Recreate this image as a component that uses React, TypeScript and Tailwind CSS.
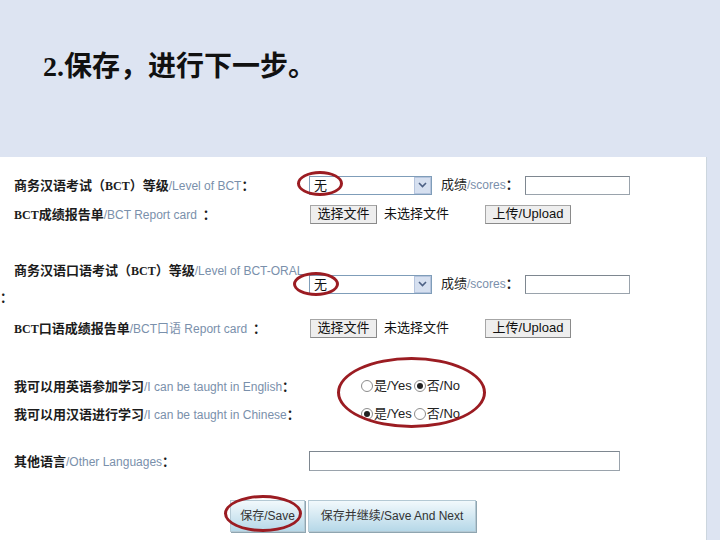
import React from "react";

const font = "font-['Liberation_Sans','Noto_Sans_CJK_SC',sans-serif]";

const Label = ({ cn, en, gap }: { cn: React.ReactNode; en: string; gap?: boolean }) => (
  <span className="whitespace-nowrap">
    <span className="font-bold text-[13px] text-[#1c1c1c]">{cn}</span>
    <span className="text-[12px] text-[#7a90ab]">{en}</span>
    <span className={`font-bold text-[13px] text-[#1c1c1c] ${gap ? "ml-[6px]" : ""}`}>：</span>
  </span>
);

const Bct = () => <span className="font-['Liberation_Serif',serif] text-[12px]">BCT</span>;

const Select = () => (
  <div className="w-[123px] h-[19px] border border-[#7f9db9] bg-white flex items-center">
    <span className="pl-[4px] flex-1 text-[13px] leading-none text-[#111]">无</span>
    <div className="w-[17px] h-[17px] bg-[#d6e0f0] border border-[#b5c4dd] flex items-center justify-center">
      <svg width="9" height="6" viewBox="0 0 9 6">
        <path d="M1 1 L4.5 4.5 L8 1" fill="none" stroke="#4d6185" strokeWidth="1.6" />
      </svg>
    </div>
  </div>
);

const Scores = () => (
  <div className="flex items-center ml-[9px]">
    <span className="text-[13px] text-[#222]">成绩</span>
    <span className="text-[12px] text-[#7a90ab]">/scores</span>
    <span className="font-bold text-[13px] text-[#1c1c1c]">：</span>
    <div className="ml-[6px] w-[105px] h-[19px] border border-[#9aa3ac] border-t-[#7e8790] border-l-[#7e8790] bg-white" />
  </div>
);

const Btn = ({ children, w }: { children: React.ReactNode; w: string }) => (
  <div
    className={`${w} h-[19px] bg-[#eeeeee] border border-[#a6a6a6] border-r-[#8a8a8a] border-b-[#8a8a8a] flex items-center justify-center text-[13px] text-[#111]`}
  >
    {children}
  </div>
);

const Upload = () => (
  <div className="flex items-center ml-[1px]">
    <Btn w="w-[67px]">选择文件</Btn>
    <span className="ml-[7px] text-[13px] text-[#111]">未选择文件</span>
    <div className="ml-[36px]">
      <Btn w="w-[86px]">上传/Upload</Btn>
    </div>
  </div>
);

const Radio = ({ on }: { on?: boolean }) => (
  <span className="w-[12px] h-[12px] rounded-full border border-[#8c8c8c] bg-white flex items-center justify-center">
    {on && <span className="w-[6px] h-[6px] rounded-full bg-[#222]" />}
  </span>
);

const YesNo = ({ yes }: { yes: boolean }) => (
  <div className="flex items-center ml-[52px] text-[13px] text-[#222]">
    <Radio on={yes} />
    <span className="ml-[1px]">是/Yes</span>
    <span className="ml-[2px]">
      <Radio on={!yes} />
    </span>
    <span className="ml-[1px]">否/No</span>
  </div>
);

const Ring = ({ cls }: { cls: string }) => (
  <div className={`absolute rounded-[50%] border-[3px] border-[#9b1c22] pointer-events-none ${cls}`} />
);

export default function App() {
  return (
    <div className={`relative w-[720px] h-[540px] overflow-hidden bg-[#dde4f2] ${font}`}>
      <div className="h-[157px] pl-[43px] pt-[49px]">
        <h1 className="font-['Liberation_Serif','Noto_Sans_CJK_SC',serif] font-bold text-[28px] leading-[36px] text-[#111]">
          2.保存，进行下一步。
        </h1>
      </div>

      <div className="w-[707px] h-[383px] bg-white border-r border-[#ccd6de] pt-[16px]">
        <div className="flex items-center h-[24px]">
          <div className="w-[309px] pl-[14px] shrink-0">
            <Label cn={<>商务汉语考试（<Bct />）等级</>} en="/Level of BCT" />
          </div>
          <Select />
          <Scores />
        </div>

        <div className="flex items-center h-[24px] mt-[5px]">
          <div className="w-[309px] pl-[14px] shrink-0">
            <Label cn={<><Bct />成绩报告单</>} en="/BCT Report card" gap />
          </div>
          <Upload />
        </div>

        <div className="flex items-center h-[44px] mt-[36px]">
          <div className="w-[309px] pl-[14px] shrink-0 flex flex-col">
            <span className="whitespace-nowrap leading-[18px]">
              <span className="font-bold text-[13px] text-[#1c1c1c]">
                商务汉语口语考试（<Bct />）等级
              </span>
              <span className="text-[12px] text-[#7a90ab]">/Level of BCT-ORAL</span>
            </span>
            <span className="-ml-[14px] mt-[9px] font-bold text-[13px] leading-[18px] text-[#1c1c1c]">：</span>
          </div>
          <Select />
          <Scores />
        </div>

        <div className="flex items-center h-[24px] mt-[10px]">
          <div className="w-[309px] pl-[14px] shrink-0">
            <Label cn={<><Bct />口语成绩报告单</>} en="/BCT口语 Report card" gap />
          </div>
          <Upload />
        </div>

        <div className="flex items-center h-[24px] mt-[34px]">
          <div className="w-[309px] pl-[14px] shrink-0">
            <Label cn="我可以用英语参加学习" en="/I can be taught in English" />
          </div>
          <YesNo yes={false} />
        </div>

        <div className="flex items-center h-[24px] mt-[4px]">
          <div className="w-[309px] pl-[14px] shrink-0">
            <Label cn="我可以用汉语进行学习" en="/I can be taught in Chinese" />
          </div>
          <YesNo yes />
        </div>

        <div className="flex items-center h-[24px] mt-[23px]">
          <div className="w-[309px] pl-[14px] shrink-0">
            <Label cn="其他语言" en="/Other Languages" />
          </div>
          <div className="w-[311px] h-[20px] border border-[#9aa3ac] border-t-[#7e8790] border-l-[#7e8790] bg-white" />
        </div>

        <div className="flex items-center mt-[27px] pl-[230px] gap-[3px]">
          <div className="w-[75px] h-[32px] bg-gradient-to-b from-[#f2f9fc] to-[#b6d8e8] border border-[#b4c9d4] shadow-[1px_1px_0_#8fa5b0] flex items-center justify-center text-[12px] text-[#333]">
            保存/Save
          </div>
          <div className="w-[168px] h-[32px] bg-gradient-to-b from-[#f2f9fc] to-[#b6d8e8] border border-[#b4c9d4] shadow-[1px_1px_0_#8fa5b0] flex items-center justify-center text-[12px] text-[#333]">
            保存并继续/Save And Next
          </div>
        </div>
      </div>

      <Ring cls="left-[297px] top-[171px] w-[46px] h-[25px]" />
      <Ring cls="left-[293px] top-[272px] w-[46px] h-[24px]" />
      <Ring cls="left-[337px] top-[357px] w-[149px] h-[71px]" />
      <Ring cls="left-[224px] top-[495px] w-[78px] h-[37px]" />
    </div>
  );
}
